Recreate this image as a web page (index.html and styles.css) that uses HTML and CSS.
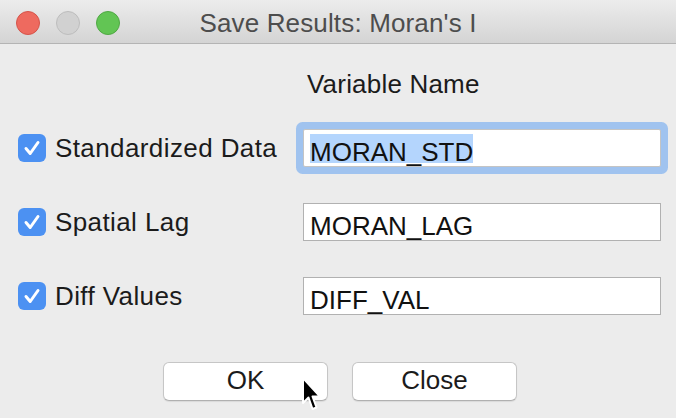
FILE: index.html
```html
<!DOCTYPE html>
<html>
<head>
<meta charset="utf-8">
<link rel="stylesheet" href="styles.css">
</head>
<body>
<div class="window">
  <div class="titlebar">
    <div class="lights">
      <span class="light red"></span>
      <span class="light gray"></span>
      <span class="light green"></span>
    </div>
    <div class="title">Save Results: Moran's I</div>
    <div></div>
  </div>
  <div class="content">
    <div class="header">Variable Name</div>
    <div class="form">
      <label class="check"><span class="box"><svg viewBox="0 0 28 28" width="28" height="28"><path d="M8 14.5 L12.2 19.5 L20 8.5" fill="none" stroke="#fff" stroke-width="3" stroke-linecap="round" stroke-linejoin="round"/></svg></span>Standardized Data</label>
      <div class="field focused"><span class="val sel">MORAN_STD</span></div>
      <label class="check"><span class="box"><svg viewBox="0 0 28 28" width="28" height="28"><path d="M8 14.5 L12.2 19.5 L20 8.5" fill="none" stroke="#fff" stroke-width="3" stroke-linecap="round" stroke-linejoin="round"/></svg></span>Spatial Lag</label>
      <div class="field"><span class="val">MORAN_LAG</span></div>
      <label class="check"><span class="box"><svg viewBox="0 0 28 28" width="28" height="28"><path d="M8 14.5 L12.2 19.5 L20 8.5" fill="none" stroke="#fff" stroke-width="3" stroke-linecap="round" stroke-linejoin="round"/></svg></span>Diff Values</label>
      <div class="field"><span class="val">DIFF_VAL</span></div>
    </div>
    <div class="buttons">
      <div class="btn">OK</div>
      <div class="btn">Close</div>
    </div>
  </div>
  <svg class="cursor" width="24" height="40" viewBox="0 0 24 40"><path d="M2 2 L2 27 L7.5 21.5 L11.5 33 L15.5 31.5 L11.5 20.5 L19 20.5 Z" fill="#000" stroke="#fff" stroke-width="2" stroke-linejoin="round"/></svg>
</div>
</body>
</html>
```
FILE: styles.css
```css
html, body {
  margin: 0;
  padding: 0;
  background: #ececec;
}
body {
  font-family: "Liberation Sans", Arial, sans-serif;
  color: #1b1b1b;
}
.window {
  position: relative;
  width: 676px;
  height: 418px;
  overflow: hidden;
  background: #ececec;
}
.titlebar {
  height: 43px;
  border-bottom: 1px solid #b4b4b4;
  background: linear-gradient(#ececec, #d4d4d4);
  display: grid;
  grid-template-columns: 1fr auto 1fr;
  align-items: center;
}
.lights {
  display: flex;
  gap: 16px;
  padding-left: 16px;
}
.light {
  width: 24px;
  height: 24px;
  border-radius: 50%;
  box-sizing: border-box;
}
.red { background: #ee6a5f; border: 1px solid #d5544a; }
.gray { background: #d1d1d1; border: 1px solid #bdbdbd; }
.green { background: #62c554; border: 1px solid #50a844; }
.title {
  font-size: 26px;
  line-height: 43px;
  padding-top: 2px;
  letter-spacing: 0.15px;
  color: #4d4d4d;
}
.content {
  padding: 25px 15px 0 18px;
}
.header {
  font-size: 26px;
  line-height: 30px;
  margin-left: 289px;
  letter-spacing: 0.2px;
}
.form {
  display: grid;
  grid-template-columns: 285px 358px;
  row-gap: 36px;
  align-items: center;
  margin-top: 30px;
}
.check {
  display: flex;
  align-items: center;
  gap: 9px;
  font-size: 26px;
  line-height: 30px;
  letter-spacing: 0.4px;
}
.box {
  width: 28px;
  height: 28px;
  border-radius: 6px;
  background: #4c91f2;
  display: block;
}
.box svg { display: block; }
.field {
  height: 38px;
  box-sizing: border-box;
  background: #fff;
  border: 1px solid #b1b1b1;
  padding: 4px 0 0 6px;
  font-size: 26px;
  overflow: visible;
}
.field.focused {
  border-color: #c4c4c4;
  border-radius: 2px;
  box-shadow: 0 0 0 7px #a0c3ef;
}
.val {
  display: inline-block;
  vertical-align: top;
  padding-top: 6px;
  height: 23px;
  line-height: 24px;
  color: #111;
}
.sel {
  background: #b4d5fd;
}
.buttons {
  display: flex;
  justify-content: center;
  gap: 24px;
  margin-top: 47px;
  padding-left: 4px;
  margin-left: -18px;
  margin-right: -15px;
}
.btn {
  width: 165px;
  height: 39px;
  box-sizing: border-box;
  background: #fff;
  border: 1px solid #c6c6c6;
  border-bottom-color: #b0b0b0;
  border-radius: 6px;
  box-shadow: 0 1px 1px rgba(0,0,0,0.08);
  text-align: center;
  font-size: 26px;
  line-height: 35px;
  color: #1b1b1b;
}
.cursor {
  position: absolute;
  left: 301px;
  top: 376px;
}
```
